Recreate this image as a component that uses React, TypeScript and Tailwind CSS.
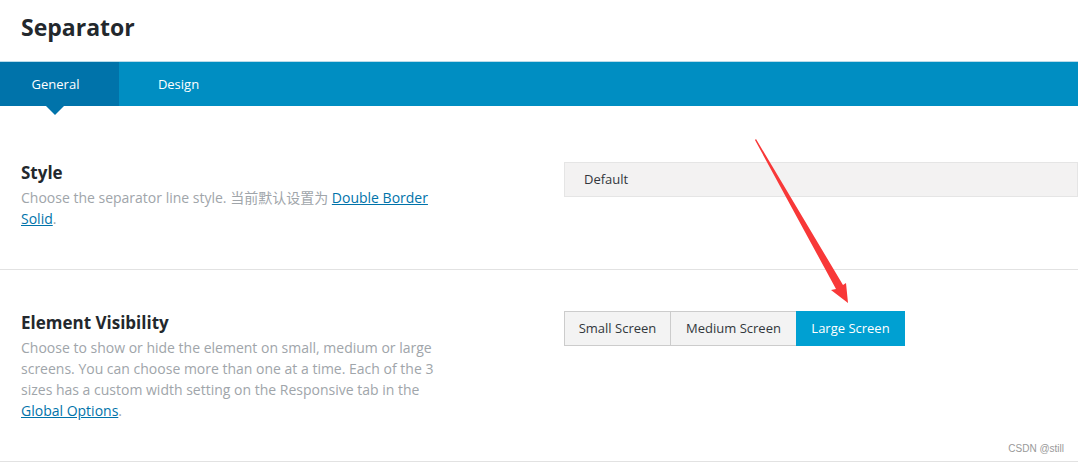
export default function App() {
  return (
    <div
      className="relative w-[1078px] h-[463px] overflow-hidden bg-white text-[#23282d]"
      style={{ fontFamily: '"Open Sans", "Noto Sans CJK SC", sans-serif' }}
    >
      {/* Title */}
      <div className="h-[61px] pl-[21px] pt-[11px]">
        <h1 className="text-[23px] font-bold leading-[32px]">Separator</h1>
      </div>

      {/* Tabs */}
      <div className="border-t border-[#b9dbea] bg-[#008ec2] h-[45px] flex text-white text-[13px] font-medium">
        <div className="relative w-[119px] bg-[#0073aa] flex items-center justify-center pt-px pr-[8px]">
          General
          <span className="absolute left-[46px] top-full w-0 h-0 border-l-[9px] border-r-[9px] border-t-[9px] border-l-transparent border-r-transparent border-t-[#0073aa]" />
        </div>
        <div className="w-[119px] flex items-center justify-center pt-px">Design</div>
      </div>

      {/* Style */}
      <div className="flex h-[164px] border-b border-[#e2e2e2] pt-[56px]">
        <div className="w-[543px] pl-[21px] pr-[108px]">
          <h3 className="text-[17px] font-bold leading-[22px]">Style</h3>
          <p className="mt-[3px] text-[14px] leading-[21px] text-[#a0a5aa]">
            Choose the separator line style. 当前默认设置为{" "}
            <a className="text-[#0073aa] underline">Double Border Solid</a>.
          </p>
        </div>
        <div className="flex-1">
          <div className="ml-[21px] h-[35px] border border-[#e5e5e5] bg-[#f3f2f2] flex items-center pl-[19px] text-[13px] text-[#32373c]">
            Default
          </div>
        </div>
      </div>

      {/* Element Visibility */}
      <div className="flex h-[192px] border-b border-[#e2e2e2] pt-[41px]">
        <div className="w-[543px] pl-[21px] pr-[100px] pt-[1px]">
          <h3 className="text-[17px] font-bold leading-[22px]">Element Visibility</h3>
          <p className="mt-[3px] text-[14px] leading-[21px] text-[#a0a5aa]">
            Choose to show or hide the element on small, medium or large screens. You can choose more than one at a time. Each of the 3 sizes has a custom width setting on the Responsive tab in the{" "}
            <a className="text-[#0073aa] underline">Global Options</a>.
          </p>
        </div>
        <div className="flex-1 pl-[21px]">
          <div className="inline-flex h-[35px] border border-[#cccccc] text-[13px]">
            <div className="w-[106px] bg-[#f3f3f3] flex items-center justify-center text-[#32373c] border-r border-[#cccccc]">Small Screen</div>
            <div className="w-[125px] bg-[#f3f3f3] flex items-center justify-center text-[#32373c]">Medium Screen</div>
            <div className="w-[109px] -my-px -mr-px bg-[#00a0d2] flex items-center justify-center text-white">Large Screen</div>
          </div>
        </div>
      </div>

      <div className="absolute right-[14px] bottom-[9px] text-[10px] text-[#999] leading-none" style={{ fontFamily: '"Liberation Sans", sans-serif' }}>
        CSDN @still
      </div>

      {/* Red arrow */}
      <svg className="absolute left-0 top-0 pointer-events-none" width="1078" height="463">
        <polygon points="755,140 756,139 843,285 846,283 848,303 831,290 836,289" fill="#f83838" />
      </svg>
    </div>
  )
}
